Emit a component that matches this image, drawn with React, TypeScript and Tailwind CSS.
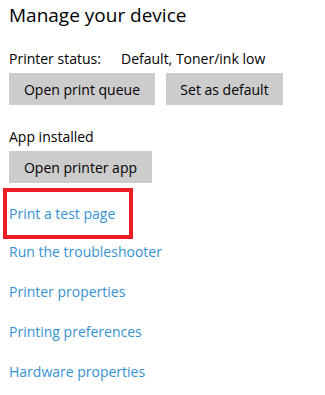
export default function App() {
  const links = [
    "Run the troubleshooter",
    "Printer properties",
    "Printing preferences",
    "Hardware properties",
  ];

  return (
    <div
      className="w-[325px] h-[395px] bg-white text-black overflow-hidden"
      style={{ fontFamily: '"Open Sans", "Noto Sans", sans-serif' }}
    >
      <div className="pl-[9px] pt-[2px]">
        <h1 className="text-[19px] leading-[26px] font-normal">Manage your device</h1>

        {/* status row */}
        <div className="mt-[21px] flex text-[14px] leading-[20px]">
          <span className="w-[112px]">Printer status:</span>
          <span>Default, Toner/ink low</span>
        </div>
        <div className="mt-[4px] flex gap-[11px]">
          <button className="w-[146px] h-[32px] bg-[#cccccc] text-[14px]">Open print queue</button>
          <button className="w-[117px] h-[32px] bg-[#cccccc] text-[14px]">Set as default</button>
        </div>

        <div className="mt-[22px] text-[14px] leading-[20px]">App installed</div>
        <button className="mt-[4px] w-[143px] h-[32px] bg-[#cccccc] text-[14px]">Open printer app</button>
      </div>

      {/* highlighted link */}
      <div className="ml-[3px] mt-[5px] w-[130px] h-[51px] border-[4px] border-[#ec1c24] flex items-center pl-[2px]">
        <a className="text-[14px] leading-[20px] text-[#3592d3]">Print a test page</a>
      </div>

      <div className="pl-[9px] flex flex-col">
        {links.map((l) => (
          <a key={l} className="h-[40px] flex items-center text-[14px] text-[#3592d3] first:-mt-[8px]">
            {l}
          </a>
        ))}
      </div>
    </div>
  );
}
